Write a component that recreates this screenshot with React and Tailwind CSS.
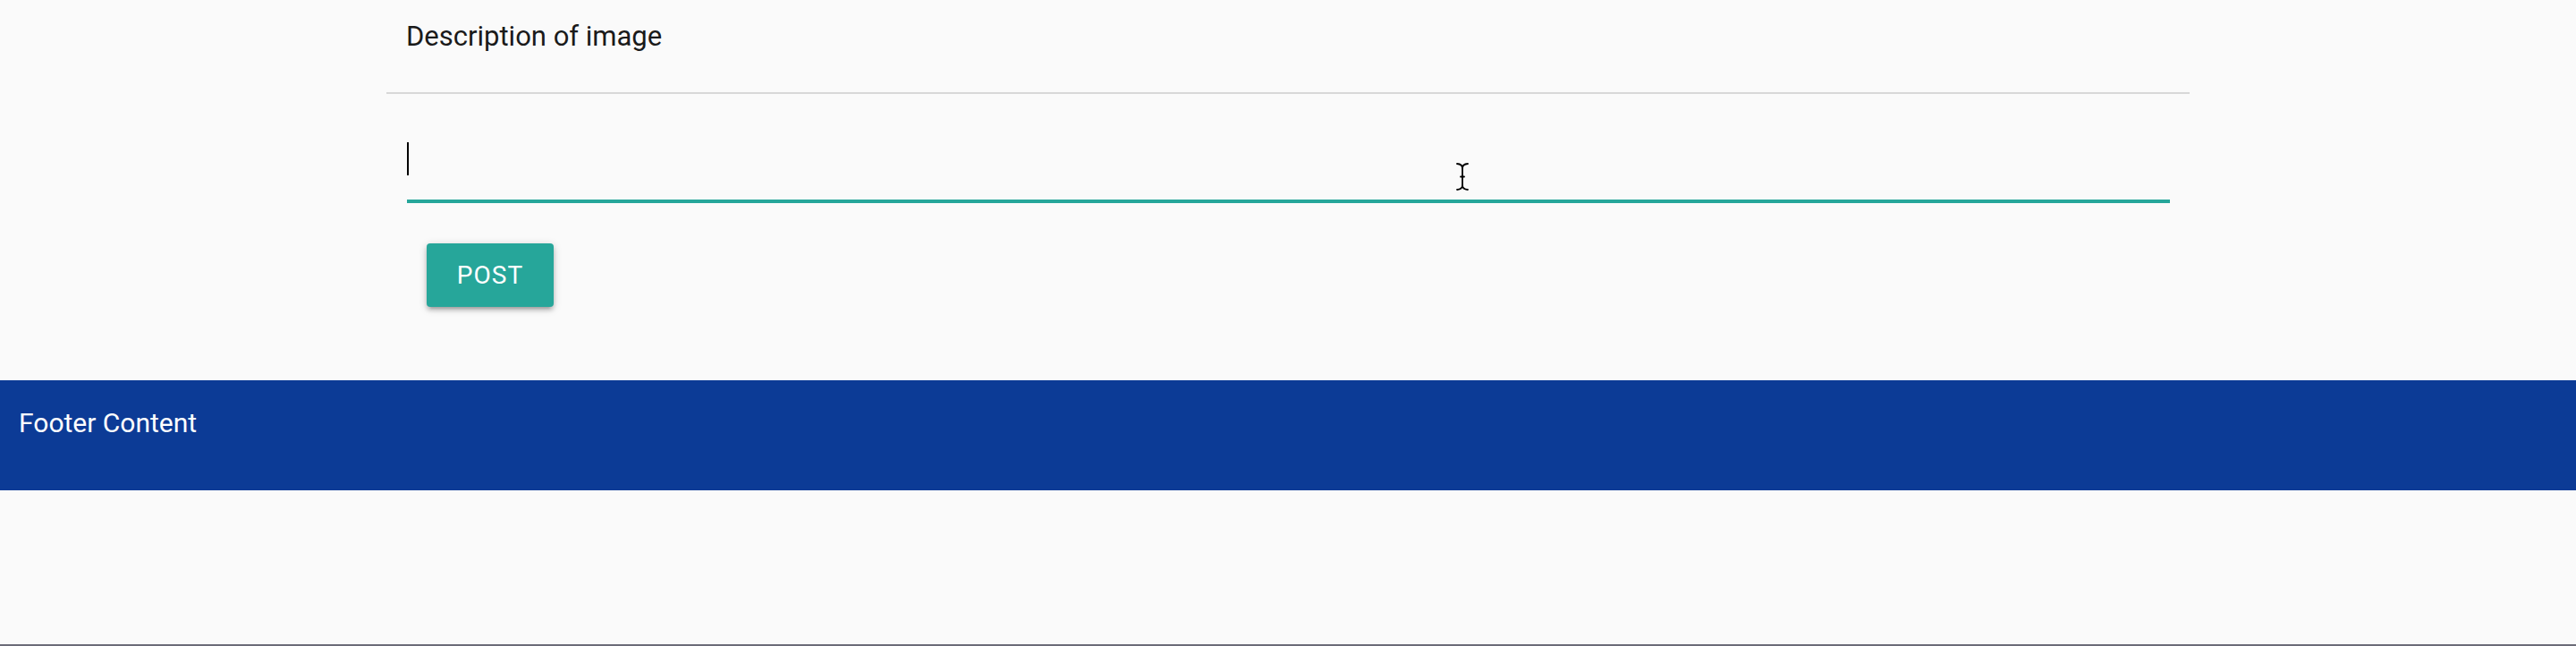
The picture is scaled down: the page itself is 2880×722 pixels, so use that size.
import React from "react";

function IBeam() {
  return (
    <svg
      className="absolute left-[1627px] top-[181px]"
      width="16"
      height="33"
      viewBox="0 0 16 33"
      fill="none"
    >
      <g stroke="#ffffff" strokeWidth="4" strokeLinecap="round" strokeLinejoin="round" opacity="0.8">
        <path d="M2 2 Q8 2.5 8 7 Q8 2.5 14 2" />
        <path d="M8 7 V26" />
        <path d="M2 31 Q8 30.5 8 26 Q8 30.5 14 31" />
      </g>
      <g stroke="#000000" strokeWidth="1.8" strokeLinecap="round" strokeLinejoin="round">
        <path d="M2 2 Q8 2.5 8 7 Q8 2.5 14 2" />
        <path d="M8 7 V26" />
        <path d="M2 31 Q8 30.5 8 26 Q8 30.5 14 31" />
        <path d="M6 16.5 H10" />
      </g>
    </svg>
  );
}

export default function App() {
  return (
    <div className="relative flex min-h-[722px] flex-col bg-[#fafafa] font-['Roboto','Liberation_Sans',sans-serif]">
      <main className="mx-auto w-[2016px] pb-[82px]">
        <div className="h-[103px] pl-[22px] pt-[18px] text-[31px] leading-[46px] text-[#1a1a1a]">
          Description of image
        </div>
        <div className="h-[2px] bg-[#d8d8d8]" />
        <div className="pl-[23px] pr-[22px] pt-[24px]">
          <div className="h-[96px] border-b-2 border-[#26a69a] pt-[30px] shadow-[0_2px_0_0_#26a69a]">
            <div className="h-[37px] w-[2px] bg-black" />
          </div>
          <div className="mt-[47px] pl-[22px]">
            <button className="flex h-[71px] w-[142px] items-center justify-center rounded-[4px] bg-[#26a69a] text-[28px] tracking-[1px] text-white shadow-[0_4px_4px_0_rgba(0,0,0,0.14),0_6px_2px_-4px_rgba(0,0,0,0.12),0_2px_10px_0_rgba(0,0,0,0.2)]">
              POST
            </button>
          </div>
        </div>
      </main>
      <footer className="h-[123px] w-full bg-[#0c3b96] pl-[21px] pt-[25px] text-[30px] leading-[45px] text-white">
        Footer Content
      </footer>
      <div className="flex-1" />
      <div className="h-[2px] bg-[#6b6b78]" />
      <IBeam />
    </div>
  );
}
